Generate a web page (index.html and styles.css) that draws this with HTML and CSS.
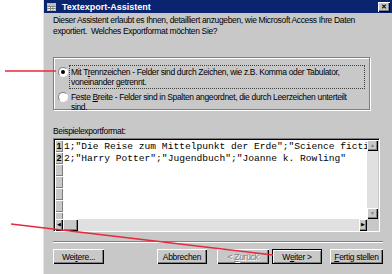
FILE: index.html
```html
<!DOCTYPE html>
<html lang="de">
<head>
    <meta charset="UTF-8">
    <meta name="viewport" content="width=device-width, initial-scale=1.0">
    <title>Textexport-Assistent</title>
    <link rel="stylesheet" href="styles.css">
</head>
<body>

    <div class="screen">
        <div class="gutter"></div>

        <div class="dialog">
            <div class="titlebar">
                <svg class="app-icon" width="9" height="8" viewBox="0 0 9 8">
                    <rect x="0.5" y="0.5" width="8" height="7" fill="#fff" stroke="#c0c0c0"/>
                    <path d="M0.5 3.5H8.5M0.5 5.5H8.5M3.5 0.5V7.5M6 0.5V7.5" stroke="#808080"/>
                    <rect x="1" y="1" width="7" height="2" fill="#c0c0c0"/>
                </svg>
                <span class="title">Textexport-Assistent</span>
                <span class="close-btn">&#x2715;</span>
            </div>

            <div class="content">
                <p class="intro">Dieser Assistent erlaubt es Ihnen, detailliert anzugeben, wie Microsoft Access Ihre Daten<br>exportiert.&nbsp; Welches Exportformat möchten Sie?</p>

                <div class="options">
                    <div class="option">
                        <span class="radio checked"></span>
                        <span class="option-text focused">Mit T<u>r</u>ennzeichen - Felder sind durch Zeichen, wie z.B. Komma oder Tabulator,<br>voneinander getrennt.</span>
                    </div>
                    <div class="option">
                        <span class="radio"></span>
                        <span class="option-text">Feste <u>B</u>reite - Felder sind in Spalten angeordnet, die durch Leerzeichen unterteilt<br>sind.</span>
                    </div>
                </div>

                <div class="preview-label">Beispielexportformat:</div>
                <div class="preview">
                    <div class="preview-main">
                        <div class="row-heads">
                            <div class="row-head">1</div>
                            <div class="row-head">2</div>
                            <div class="row-head"></div>
                            <div class="row-head"></div>
                            <div class="row-head"></div>
                            <div class="row-head"></div>
                            <div class="row-head"></div>
                        </div>
                        <div class="preview-text">
                            <div>1;"Die Reise zum Mittelpunkt der Erde";"Science ficti</div>
                            <div>2;"Harry Potter";"Jugendbuch";"Joanne k. Rowling"</div>
                        </div>
                    </div>
                    <div class="vscroll">
                        <span class="arrow">&#x25B2;</span>
                        <span class="track"></span>
                        <span class="arrow">&#x25BC;</span>
                    </div>
                    <div class="hscroll">
                        <span class="arrow">&#x25C0;</span>
                        <span class="thumb"></span>
                        <span class="track"></span>
                        <span class="arrow">&#x25B6;</span>
                    </div>
                    <div class="corner"></div>
                </div>

                <div class="separator"></div>

                <div class="buttons">
                    <button class="btn">Wei<u>t</u>ere...</button>
                    <div class="btn-group">
                        <button class="btn cancel">Abbrechen</button>
                        <button class="btn back disabled">&lt; <u>Z</u>urück</button>
                        <button class="btn next default">W<u>e</u>iter &gt;</button>
                        <button class="btn finish"><u>F</u>ertig stellen</button>
                    </div>
                </div>
            </div>
        </div>

        <svg class="pointers" width="392" height="274" viewBox="0 0 392 274">
            <line x1="5" y1="71" x2="56" y2="71" stroke="#e8283c" stroke-width="1.3"/>
            <line x1="11" y1="224" x2="273" y2="255" stroke="#e8283c" stroke-width="1.3"/>
        </svg>
    </div>

</body>
</html>
```

FILE: styles.css
```css
body {
    margin: 0;
    padding: 0;
    background: #fff;
    font-family: "Liberation Sans", Arial, sans-serif;
    font-size: 8.5px;
    color: #000;
}

.screen {
    position: relative;
    display: flex;
    width: 392px;
    height: 274px;
    overflow: hidden;
}

.gutter {
    width: 43px;
    flex-shrink: 0;
}

.dialog {
    flex: 1;
    background: #c8c8c8;
    border-left: 1px solid #e4e4e4;
}

.titlebar {
    height: 13px;
    background: #0a2470;
    display: flex;
    align-items: center;
    padding: 0 2px 0 3px;
    color: #fff;
}
.app-icon {
    flex-shrink: 0;
}
.title {
    margin-left: 6px;
    font-weight: bold;
    font-size: 9px;
    flex: 1;
}
.close-btn {
    width: 12px;
    height: 10px;
    background: #c8c8c8;
    color: #000;
    font-size: 7px;
    font-weight: bold;
    line-height: 10px;
    text-align: center;
    box-shadow: inset 1px 1px #fff, inset -1px -1px #000, inset -2px -2px #808080;
}

.content {
    padding: 2px 9px 0 9px;
}

.intro {
    margin: 0;
    line-height: 11px;
    letter-spacing: -0.35px;
    white-space: nowrap;
}

.options {
    margin-top: 20px;
    width: 317px;
    height: 53px;
    box-sizing: border-box;
    border: 1px solid #808080;
    box-shadow: 1px 1px #fff, inset 1px 1px #fff;
    padding: 7px 0 0 4px;
}
.option {
    display: flex;
    align-items: flex-start;
    margin-bottom: 1px;
}
.radio {
    width: 10px;
    height: 10px;
    border-radius: 50%;
    background: #fff;
    box-sizing: border-box;
    border: 1px solid;
    border-color: #808080 #fff #fff #808080;
    margin-top: 2px;
    position: relative;
    flex-shrink: 0;
}
.radio.checked::after {
    content: "";
    position: absolute;
    left: 2px;
    top: 2px;
    width: 4px;
    height: 4px;
    border-radius: 50%;
    background: #000;
}
.option-text {
    margin-left: 1px;
    line-height: 10px;
    padding: 1px 1px;
    letter-spacing: -0.35px;
    white-space: nowrap;
    border: 1px dotted transparent;
    width: 292px;
}
.option-text.focused {
    border-color: #404040;
}

.preview-label {
    margin-top: 17px;
    line-height: 9px;
    letter-spacing: -0.35px;
}

.preview {
    margin-top: 2px;
    width: 327px;
    height: 94px;
    box-sizing: border-box;
    border: 1px solid;
    border-color: #808080 #fff #fff #808080;
    box-shadow: inset 1px 1px #000;
    padding: 1px 1px 0 1px;
    display: grid;
    grid-template-columns: 1fr 11px;
    grid-template-rows: 1fr 12px;
}

.preview-main {
    display: flex;
    overflow: hidden;
    background: #fff;
}
.row-heads {
    width: 8px;
    flex-shrink: 0;
    background: #c8c8c8;
}
.row-head {
    height: 12px;
    box-sizing: border-box;
    box-shadow: inset 1px 1px #fff, inset -1px -1px #808080;
    font-size: 9px;
    font-weight: bold;
    line-height: 12px;
    text-align: center;
}
.preview-text {
    padding: 1px 0 0 1px;
    font-family: "Liberation Mono", "Courier New", monospace;
    font-size: 9.6px;
    line-height: 12px;
    white-space: nowrap;
}

.vscroll,
.hscroll {
    display: flex;
    background: #e0e0e0;
}
.vscroll {
    flex-direction: column;
}
.track {
    flex: 1;
}
.arrow,
.thumb,
.corner {
    background: #c8c8c8;
    box-shadow: inset 1px 1px #fff, inset -1px -1px #000, inset -2px -2px #808080;
    font-size: 5px;
    line-height: 11px;
    text-align: center;
}
.vscroll .arrow {
    height: 11px;
    color: #808080;
}
.hscroll .arrow {
    width: 8px;
}
.thumb {
    width: 15px;
}
.corner {
    box-shadow: none;
}

.separator {
    margin-top: 9px;
    height: 0;
    border-top: 1px solid #808080;
    border-bottom: 1px solid #fff;
}

.buttons {
    margin-top: 6px;
    display: flex;
    justify-content: space-between;
}
.btn-group {
    display: flex;
}
.btn {
    height: 15px;
    padding: 0;
    font-family: inherit;
    font-size: 8.5px;
    letter-spacing: -0.3px;
    background: #c8c8c8;
    color: #000;
    border: none;
    box-shadow: inset 1px 1px #fff, inset -1px -1px #000, inset -2px -2px #808080;
    width: 51px;
}
.btn.cancel {
    width: 50px;
    margin-right: 10px;
}
.btn.back {
    width: 52px;
}
.btn.next {
    width: 50px;
    margin-left: 3px;
}
.btn.finish {
    width: 53px;
    margin-left: 8px;
}
.btn.disabled {
    color: #808080;
    text-shadow: 1px 1px #fff;
}
.btn.default {
    box-shadow: inset 0 0 0 1px #000, inset 2px 2px #fff, inset -2px -2px #808080;
}

.pointers {
    position: absolute;
    left: 0;
    top: 0;
    pointer-events: none;
}
```
